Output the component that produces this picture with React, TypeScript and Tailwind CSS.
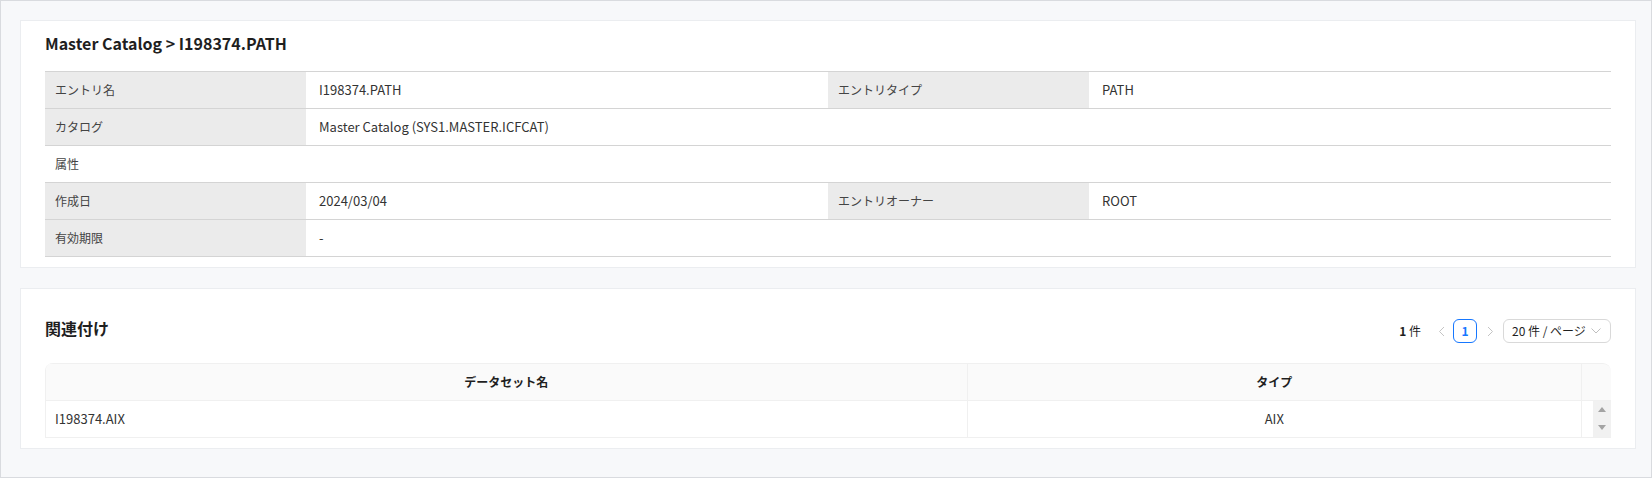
import React from "react";

function Label({ children }: { children: React.ReactNode }) {
  return (
    <div className="h-[37px] border-b border-[#d4d4d4] bg-[#ebebeb] pl-[10px] flex items-center text-[12px] text-[#444]">
      {children}
    </div>
  );
}

function Value({ children, span }: { children: React.ReactNode; span?: boolean }) {
  return (
    <div
      className={
        (span ? "col-span-3 " : "") +
        "h-[37px] border-b border-[#d4d4d4] bg-white pl-[13px] flex items-center text-[13px] text-[#333]"
      }
    >
      {children}
    </div>
  );
}

export default function App() {
  return (
    <div className="w-[1652px] h-[478px] bg-[#f7f8fa] border border-[#d9dbdf] pt-[19px] pl-[19px] pr-[15px] font-['Noto_Sans_CJK_JP',sans-serif]">
      {/* Card 1 */}
      <div className="bg-white border border-[#ebedf0] px-6 pt-[10px] pb-[10px]">
        <h1 className="text-[16px] leading-6 font-bold text-[#1f1f1f] mb-4">
          Master Catalog &gt; I198374.PATH
        </h1>
        <div className="grid grid-cols-[1fr_2fr_1fr_2fr] border-t border-[#d4d4d4]">
          <Label>エントリ名</Label>
          <Value>I198374.PATH</Value>
          <Label>エントリタイプ</Label>
          <Value>PATH</Value>

          <Label>カタログ</Label>
          <Value span>Master Catalog (SYS1.MASTER.ICFCAT)</Value>

          <div className="col-span-4 h-[37px] border-b border-[#d4d4d4] bg-white pl-[10px] flex items-center text-[12px] text-[#444]">
            属性
          </div>

          <Label>作成日</Label>
          <Value>2024/03/04</Value>
          <Label>エントリオーナー</Label>
          <Value>ROOT</Value>

          <Label>有効期限</Label>
          <Value span>-</Value>
        </div>
      </div>

      {/* Card 2 */}
      <div className="mt-5 bg-white border border-[#ebedf0] px-6 pb-[10px]">
        <div className="flex justify-between items-start h-[54px]">
          <h2 className="mt-[27px] text-[16px] leading-6 font-bold text-[#1f1f1f]">関連付け</h2>
          <div className="mt-[30px] flex items-center h-6 text-[12px] text-[#1f1f1f]">
            <span>
              <span className="font-bold">1</span> 件
            </span>
            <span className="ml-[8px] w-6 h-6 flex items-center justify-center">
              <svg width="7" height="11" viewBox="0 0 7 11" fill="none">
                <polyline points="6,1 1.5,5.5 6,10" stroke="#c4c4c4" strokeWidth="1" />
              </svg>
            </span>
            <span className="w-6 h-6 rounded-md border border-[#1677ff] text-[#1677ff] font-bold flex items-center justify-center">
              1
            </span>
            <span className="w-[26px] h-6 flex items-center justify-center">
              <svg width="7" height="11" viewBox="0 0 7 11" fill="none">
                <polyline points="1,1 5.5,5.5 1,10" stroke="#c4c4c4" strokeWidth="1" />
              </svg>
            </span>
            <div className="w-[108px] h-6 rounded-md border border-[#d9d9d9] pl-[8px] pr-[9px] flex items-center justify-between text-[12px] text-[#1f1f1f]">
              <span>20 件 / ページ</span>
              <svg width="10" height="6" viewBox="0 0 10 6" fill="none">
                <polyline points="0.5,0.5 5,5 9.5,0.5" stroke="#bfbfbf" strokeWidth="1" />
              </svg>
            </div>
          </div>
        </div>

        <div className="mt-5 border-l border-[#f0f0f0] rounded-tl-lg rounded-tr-lg overflow-hidden">
          <div className="grid grid-cols-[3fr_2fr_29px]">
            <div className="h-[38px] bg-[#fafafa] border-t border-b border-r border-[#f0f0f0] flex items-center justify-center text-[12px] font-bold text-[#1f1f1f]">
              データセット名
            </div>
            <div className="h-[38px] bg-[#fafafa] border-t border-b border-r border-[#f0f0f0] flex items-center justify-center text-[12px] font-bold text-[#1f1f1f]">
              タイプ
            </div>
            <div className="h-[38px] bg-[#fafafa] border-t border-b border-[#f0f0f0] rounded-tr-lg"></div>

            <div className="h-[37px] bg-white border-b border-r border-[#f0f0f0] pl-[9px] flex items-center text-[13px] text-[#333]">
              I198374.AIX
            </div>
            <div className="h-[37px] bg-white border-b border-r border-[#f0f0f0] flex items-center justify-center text-[13px] text-[#333]">
              AIX
            </div>
            <div className="h-[37px] bg-white border-b border-[#f0f0f0] flex justify-end">
              <div className="w-[18px] h-full bg-[#f1f1f1] flex flex-col items-center justify-between pt-[6px] pb-[7px]">
                <svg width="8" height="5" viewBox="0 0 8 5">
                  <polygon points="4,0 8,5 0,5" fill="#a3a3a3" />
                </svg>
                <svg width="8" height="5" viewBox="0 0 8 5">
                  <polygon points="0,0 8,0 4,5" fill="#a3a3a3" />
                </svg>
              </div>
            </div>
          </div>
        </div>
      </div>
    </div>
  );
}
